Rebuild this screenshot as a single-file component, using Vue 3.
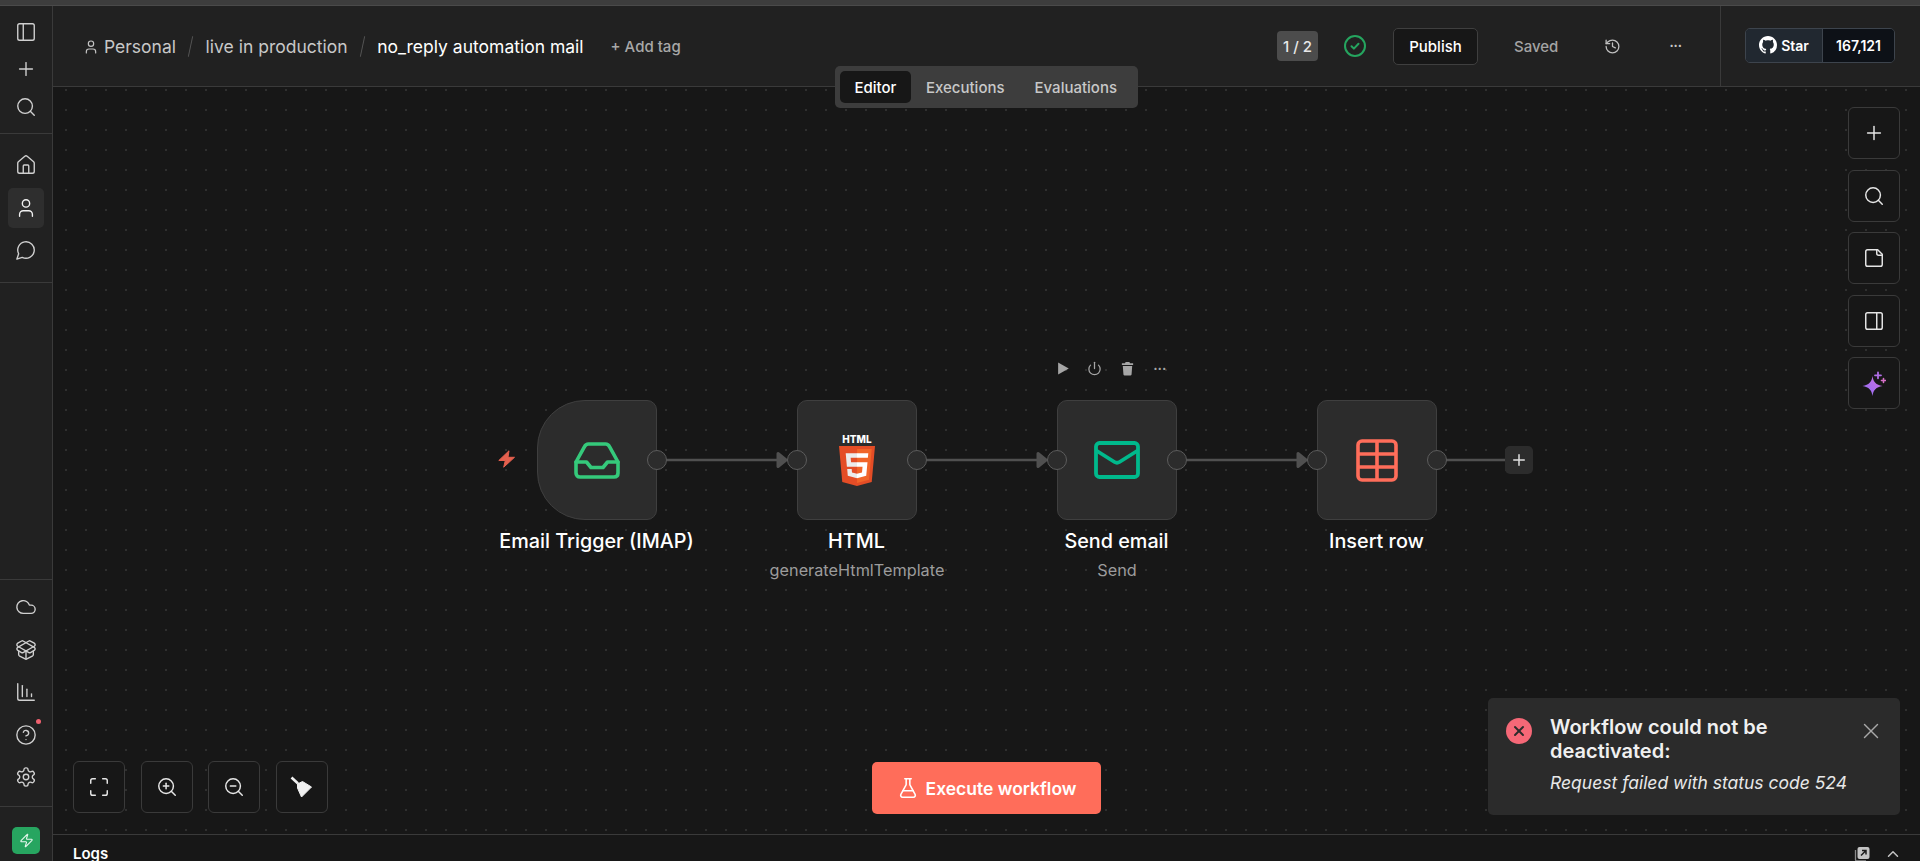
<script setup>
import { h } from 'vue'

const icons = {
  panelLeft: ['M5 3h14a2 2 0 0 1 2 2v14a2 2 0 0 1-2 2H5a2 2 0 0 1-2-2V5a2 2 0 0 1 2-2z', 'M9 3v18'],
  panelRight: ['M5 3h14a2 2 0 0 1 2 2v14a2 2 0 0 1-2 2H5a2 2 0 0 1-2-2V5a2 2 0 0 1 2-2z', 'M15 3v18'],
  plus: ['M5 12h14', 'M12 5v14'],
  search: ['M3 11a8 8 0 1 0 16 0a8 8 0 1 0-16 0', 'M21 21l-4.3-4.3'],
  home: ['M15 21v-8a1 1 0 0 0-1-1h-4a1 1 0 0 0-1 1v8', 'M3 10a2 2 0 0 1 .709-1.528l7-5.999a2 2 0 0 1 2.582 0l7 5.999A2 2 0 0 1 21 10v9a2 2 0 0 1-2 2H5a2 2 0 0 1-2-2z'],
  user: ['M19 21v-2a4 4 0 0 0-4-4H9a4 4 0 0 0-4 4v2', 'M8 7a4 4 0 1 0 8 0a4 4 0 1 0-8 0'],
  chat: ['M7.9 20A9 9 0 1 0 4 16.1L2 22Z'],
  cloud: ['M17.5 19H9a7 7 0 1 1 6.71-9h1.79a4.5 4.5 0 1 1 0 9Z'],
  box: ['M12 22v-9', 'M15.17 2.21a1.67 1.67 0 0 1 1.63 0L21 4.57a1.93 1.93 0 0 1 0 3.36L8.82 14.79a1.655 1.655 0 0 1-1.64 0L3 12.43a1.93 1.93 0 0 1 0-3.36z', 'M20 13v3.87a2.06 2.06 0 0 1-1.11 1.83l-6 3.08a1.93 1.93 0 0 1-1.78 0l-6-3.08A2.06 2.06 0 0 1 4 16.87V13', 'M21 12.43a1.93 1.93 0 0 0 0-3.36L8.83 2.2a1.64 1.64 0 0 0-1.63 0L3 4.57a1.93 1.93 0 0 0 0 3.36l12.18 6.86a1.636 1.636 0 0 0 1.63 0z'],
  chart: ['M13 17V9', 'M18 17v-3', 'M3 3v16a2 2 0 0 0 2 2h16', 'M8 17V5'],
  help: ['M2 12a10 10 0 1 0 20 0a10 10 0 1 0-20 0', 'M9.09 9a3 3 0 0 1 5.83 1c0 2-3 3-3 3', 'M12 17h.01'],
  gear: ['M12.22 2h-.44a2 2 0 0 0-2 2v.18a2 2 0 0 1-1 1.73l-.43.25a2 2 0 0 1-2 0l-.15-.08a2 2 0 0 0-2.73.73l-.22.38a2 2 0 0 0 .73 2.73l.15.1a2 2 0 0 1 1 1.72v.51a2 2 0 0 1-1 1.74l-.15.09a2 2 0 0 0-.73 2.73l.22.38a2 2 0 0 0 2.73.73l.15-.08a2 2 0 0 1 2 0l.43.25a2 2 0 0 1 1 1.73V20a2 2 0 0 0 2 2h.44a2 2 0 0 0 2-2v-.18a2 2 0 0 1 1-1.73l.43-.25a2 2 0 0 1 2 0l.15.08a2 2 0 0 0 2.73-.73l.22-.39a2 2 0 0 0-.73-2.73l-.15-.08a2 2 0 0 1-1-1.74v-.5a2 2 0 0 1 1-1.74l.15-.09a2 2 0 0 0 .73-2.73l-.22-.38a2 2 0 0 0-2.73-.73l-.15.08a2 2 0 0 1-2 0l-.43-.25a2 2 0 0 1-1-1.73V4a2 2 0 0 0-2-2z', 'M9 12a3 3 0 1 0 6 0a3 3 0 1 0-6 0'],
  zap: ['M4 14a1 1 0 0 1-.78-1.63l9.9-10.2a.5.5 0 0 1 .86.46l-1.92 6.02A1 1 0 0 0 13 10h7a1 1 0 0 1 .78 1.63l-9.9 10.2a.5.5 0 0 1-.86-.46l1.92-6.02A1 1 0 0 0 11 14z'],
  history: ['M3 12a9 9 0 1 0 9-9 9.75 9.75 0 0 0-6.74 2.74L3 8', 'M3 3v5h5', 'M12 7v5l4 2'],
  flask: ['M14 2v6a2 2 0 0 0 .245.96l5.51 10.08A2 2 0 0 1 18 22H6a2 2 0 0 1-1.755-2.96l5.51-10.08A2 2 0 0 0 10 8V2', 'M6.453 15h11.094', 'M8.5 2h7'],
  fit: ['M8 3H5a2 2 0 0 0-2 2v3', 'M21 8V5a2 2 0 0 0-2-2h-3', 'M3 16v3a2 2 0 0 0 2 2h3', 'M16 21h3a2 2 0 0 0 2-2v-3'],
  zoomIn: ['M3 11a8 8 0 1 0 16 0a8 8 0 1 0-16 0', 'M21 21l-4.35-4.35', 'M11 8v6', 'M8 11h6'],
  zoomOut: ['M3 11a8 8 0 1 0 16 0a8 8 0 1 0-16 0', 'M21 21l-4.35-4.35', 'M8 11h6'],
  note: ['M16 3H5a2 2 0 0 0-2 2v14a2 2 0 0 0 2 2h14a2 2 0 0 0 2-2V8Z', 'M15 3v4a2 2 0 0 0 2 2h4'],
  power: ['M12 2v10', 'M18.4 6.6a9 9 0 1 1-12.77.04'],
  close: ['M18 6 6 18', 'm6 6 12 12'],
  up: ['m18 15-6-6-6 6'],
}

const Ic = (p) =>
  h(
    'svg',
    { viewBox: '0 0 24 24', fill: 'none', stroke: 'currentColor', 'stroke-width': 2, 'stroke-linecap': 'round', 'stroke-linejoin': 'round' },
    icons[p.name].map((d) => h('path', { d })),
  )
Ic.props = ['name']

const sideTop = [{ name: 'panelLeft' }, { name: 'plus' }, { name: 'search' }]
const sideMid = [{ name: 'home' }, { name: 'user', active: true }, { name: 'chat' }]
const sideBottom = ['cloud', 'box', 'chart', 'help', 'gear']
const edges = [
  { x1: 614, x2: 724 },
  { x1: 874, x2: 984 },
  { x1: 1134, x2: 1244 },
]
</script>

<template>
  <div class="app">
    <div class="strip"></div>
    <div class="main">
      <aside class="sidebar">
        <div class="side-group top">
          <button v-for="i in sideTop" :key="i.name" class="side-btn"><Ic :name="i.name" class="side-ic" /></button>
        </div>
        <div class="side-group mid">
          <button v-for="i in sideMid" :key="i.name" class="side-btn" :class="{ active: i.active }"><Ic :name="i.name" class="side-ic" /></button>
        </div>
        <div class="side-spacer"></div>
        <div class="side-group bottom">
          <button v-for="n in sideBottom" :key="n" class="side-btn">
            <Ic :name="n" class="side-ic" />
            <span v-if="n === 'help'" class="dot"></span>
          </button>
        </div>
        <div class="side-foot">
          <div class="logo"><Ic name="zap" class="logo-ic" /></div>
        </div>
      </aside>

      <div class="content">
        <header class="header">
          <div class="crumbs">
            <Ic name="user" class="crumb-ic" />
            <span class="crumb">Personal</span>
            <span class="sep"></span>
            <span class="crumb">live in production</span>
            <span class="sep"></span>
            <span class="crumb current">no_reply automation mail</span>
            <span class="add-tag">+ Add tag</span>
          </div>
          <div class="actions">
            <span class="badge">1 / 2</span>
            <svg class="check" viewBox="0 0 22 22" fill="none">
              <circle cx="11" cy="11" r="10" stroke="#25a55f" stroke-width="2" />
              <path d="M7.5 11.2l2.4 2.4 4.6-4.8" stroke="#25a55f" stroke-width="2" stroke-linecap="round" stroke-linejoin="round" />
            </svg>
            <button class="publish">Publish</button>
            <span class="saved">Saved</span>
            <Ic name="history" class="hist" />
            <span class="more">•••</span>
          </div>
          <div class="star-wrap">
            <div class="star">
              <span class="star-l">
                <svg class="gh" viewBox="0 0 16 16" fill="currentColor"><path d="M8 0C3.58 0 0 3.58 0 8c0 3.54 2.29 6.53 5.47 7.59.4.07.55-.17.55-.38 0-.19-.01-.82-.01-1.49-2.01.37-2.53-.49-2.69-.94-.09-.23-.48-.94-.82-1.13-.28-.15-.68-.52-.01-.53.63-.01 1.08.58 1.23.82.72 1.21 1.87.87 2.33.66.07-.52.28-.87.51-1.07-1.78-.2-3.64-.89-3.64-3.95 0-.87.31-1.59.82-2.15-.08-.2-.36-1.02.08-2.12 0 0 .67-.21 2.2.82.64-.18 1.32-.27 2-.27.68 0 1.36.09 2 .27 1.53-1.04 2.2-.82 2.2-.82.44 1.1.16 1.92.08 2.12.51.56.82 1.27.82 2.15 0 3.07-1.87 3.75-3.65 3.95.29.25.54.73.54 1.48 0 1.07-.01 1.93-.01 2.2 0 .21.15.46.55.38A8.013 8.013 0 0016 8c0-4.42-3.58-8-8-8z"/></svg>
                Star
              </span>
              <span class="star-r">167,121</span>
            </div>
          </div>
        </header>

        <div class="tabs">
          <span class="tab on">Editor</span>
          <span class="tab">Executions</span>
          <span class="tab">Evaluations</span>
        </div>

        <main class="canvas">
          <svg class="wires" width="1867" height="747">
            <g fill="#505050" stroke="#505050" stroke-linejoin="round">
              <template v-for="e in edges" :key="e.x1">
                <path :d="`M${e.x1} 373 H${e.x2}`" fill="none" stroke-width="2.6" />
                <path :d="`M${e.x2 + 1} 366.5 L${e.x2 + 9} 373 L${e.x2 + 1} 379.5 Z`" stroke-width="3" />
              </template>
              <path d="M1374 373 H1456" fill="none" stroke-width="2.6" />
            </g>
          </svg>

          <svg class="bolt" viewBox="0 0 18 18"><path d="M11 .8 .8 10.500h6.500L5.700 17.200 16.500 7.300h-6.500z" fill="#e5604e" stroke="#e5604e" stroke-width="1" stroke-linejoin="round" /></svg>

          <div class="node n1 trigger">
            <svg class="glyph inbox" viewBox="0 0 46 37" fill="none" stroke="#35c97b" stroke-width="3.6" stroke-linejoin="round" stroke-linecap="round">
              <path d="M2 20 10.500 4.600C11.300 3 12.500 2 14.400 2h17.200c1.900 0 3.100 1 3.900 2.600L44 20v11c0 2.600-1.600 4-4 4H6c-2.400 0-4-1.400-4-4z" />
              <path d="M2 20h10.500l4.500 5.500h12l4.500-5.500H44" />
            </svg>
            <span class="handle right"></span>
          </div>
          <div class="node n2">
            <div class="html5">
              <span class="html5-t">HTML</span>
              <svg class="shield" viewBox="30 0 451 512" preserveAspectRatio="none">
                <path d="M71 460 30 0h451l-41 460-185 52z" fill="#e44d26" />
                <path d="M256 472l149-41 35-394H256z" fill="#f16529" />
                <path d="M256 208h-75l-5-58h80V94H114l15 171h127zM256 355l-63-17-4-45h-56l7 89 116 32z" fill="#ebebeb" />
                <path d="M255 208v57h70l-7 73-63 17v59l116-32 16-174zM255 94v56h137l5-56z" fill="#fff" />
              </svg>
            </div>
            <span class="handle left"></span>
            <span class="handle right"></span>
          </div>
          <div class="node n3">
            <svg class="glyph mail" viewBox="0 0 46 38" fill="none" stroke="#00b98c" stroke-width="3.800" stroke-linejoin="round" stroke-linecap="round">
              <rect x="2" y="2" width="42" height="34" rx="3.500" />
              <path d="M3 10l17.500 11c1.600 1 3.400 1 5 0L43 10" />
            </svg>
            <span class="handle left"></span>
            <span class="handle right"></span>
          </div>
          <div class="node n4">
            <svg class="glyph table" viewBox="0 0 42 43" fill="none" stroke="#ff6d5a" stroke-width="3.600" stroke-linejoin="round">
              <rect x="2" y="2" width="38" height="39" rx="4" />
              <path d="M2 15h38M2 28h38M21 2v39" />
            </svg>
            <span class="handle left"></span>
            <span class="handle right"></span>
          </div>

          <div class="label l1"><div class="l-main">Email Trigger (IMAP)</div></div>
          <div class="label l2"><div class="l-main">HTML</div><div class="l-sub">generateHtmlTemplate</div></div>
          <div class="label l3"><div class="l-main">Send email</div><div class="l-sub">Send</div></div>
          <div class="label l4"><div class="l-main">Insert row</div></div>

          <div class="node-tools">
            <svg class="tool" viewBox="0 0 24 24" fill="currentColor"><path d="M5 2.500 22 12 5 21.500z" /></svg>
            <Ic name="power" class="tool" />
            <svg class="tool" viewBox="0 0 24 24" fill="currentColor"><path d="M9 1.500h6l1 2h5v3H3v-3h5zM4.500 8h15l-1 13.500a2 2 0 0 1-2 1.500h-9a2 2 0 0 1-2-1.500z" /></svg>
            <span class="tool-more">•••</span>
          </div>

          <button class="add"><Ic name="plus" class="add-ic" /></button>

          <div class="right-tools">
            <button class="fbtn"><Ic name="plus" class="f-ic" /></button>
            <button class="fbtn"><Ic name="search" class="f-ic" /></button>
            <button class="fbtn"><Ic name="note" class="f-ic" /></button>
            <button class="fbtn"><Ic name="panelRight" class="f-ic" /></button>
            <button class="fbtn">
              <svg class="spark" viewBox="0 0 24 24">
                <defs>
                  <linearGradient id="sg" x1="0" y1="1" x2="1" y2="0">
                    <stop offset="0" stop-color="#8f6cf6" />
                    <stop offset="1" stop-color="#cf70e0" />
                  </linearGradient>
                </defs>
                <path d="M10.500 4.500C11.300 10.500 14 13.300 20.500 14.500 14 15.700 11.300 18.500 10.500 24.500 9.700 18.500 7 15.700.5 14.500 7 13.300 9.700 10.500 10.500 4.500z" fill="url(#sg)" />
                <path d="M16 .8v6M13 3.800h6" stroke="#b06ee6" stroke-width="1.800" stroke-linecap="round" />
                <path d="M21.500 7v4M19.500 9h4" stroke="#d870c8" stroke-width="1.600" stroke-linecap="round" />
              </svg>
            </button>
          </div>

          <div class="left-tools">
            <button class="fbtn"><Ic name="fit" class="f-ic" /></button>
            <button class="fbtn"><Ic name="zoomIn" class="f-ic" /></button>
            <button class="fbtn"><Ic name="zoomOut" class="f-ic" /></button>
            <button class="fbtn">
              <svg class="broom" viewBox="0 0 24 24" fill="currentColor" stroke="currentColor" stroke-linejoin="round">
                <path d="M1.500 2.500 8 8.500" fill="none" stroke-width="2.600" />
                <path d="M7.500 9 12.500 6.500 21.500 12 11.500 22 7.500 13z" stroke-width="1" />
              </svg>
            </button>
          </div>

          <button class="execute"><Ic name="flask" class="ex-ic" /><span>Execute workflow</span></button>

          <div class="toast">
            <span class="t-icon"><Ic name="close" class="t-x" /></span>
            <div class="t-body">
              <div class="t-title">Workflow could not be deactivated:</div>
              <div class="t-msg">Request failed with status code 524</div>
            </div>
            <Ic name="close" class="t-close" />
          </div>
        </main>

        <footer class="logs">
          <span class="logs-t">Logs</span>
          <div class="logs-r">
            <svg class="logs-pop" viewBox="0 0 16 16" fill="none">
              <path d="M1.500 4v9.500a1.500 1.500 0 0 0 1.500 1.500h9" stroke="#8a8a8a" stroke-width="1.300" />
              <rect x="3.500" y="1" width="12" height="12" rx="2" fill="#c4c4c4" />
              <path d="M7 9.500l5-5M8 4.500h4v4" stroke="#1c1c1c" stroke-width="1.500" />
            </svg>
            <Ic name="up" class="logs-ic" />
          </div>
        </footer>
      </div>
    </div>
  </div>
</template>

<style>
html, body { margin: 0; background: #171717; overflow: hidden; }
</style>

<style scoped>
.app {
  height: 861px;
  display: flex;
  flex-direction: column;
  overflow: hidden;
  font-family: Inter, "Noto Sans", sans-serif;
  color: #fff;
  background: #171717;
}
button { font: inherit; color: inherit; background: none; border: 0; padding: 0; }
.strip { height: 5px; background: #3d3d3d; border-bottom: 1px solid #4a4a4a; flex: none; }
.main { flex: 1; display: flex; min-height: 0; }

.sidebar {
  width: 53px;
  flex: none;
  box-sizing: border-box;
  background: #212121;
  border-right: 1px solid #3a3a3a;
  display: flex;
  flex-direction: column;
  align-items: stretch;
}
.side-group { display: flex; flex-direction: column; align-items: center; }
.side-group.top { height: 128px; padding-top: 7px; box-sizing: border-box; border-bottom: 1px solid #3a3a3a; }
.side-group.top .side-btn { height: 37.500px; }
.side-group.mid { height: 149px; padding-top: 10px; box-sizing: border-box; border-bottom: 1px solid #3a3a3a; }
.side-group.mid .side-btn { height: 42.500px; }
.side-spacer { flex: 1; }
.side-group.bottom { height: 228px; padding-top: 6px; box-sizing: border-box; border-top: 1px solid #3a3a3a; border-bottom: 1px solid #3a3a3a; }
.side-group.bottom .side-btn { height: 42.500px; }
.side-btn { width: 36px; display: flex; align-items: center; justify-content: center; color: #d0d0d0; position: relative; border-radius: 5px; }
.side-btn.active { background: #2e2e2e; color: #f0f0f0; height: 40px !important; margin: 1px 0; }
.side-ic { width: 22px; height: 22px; stroke-width: 1.500; }
.dot { position: absolute; top: 5px; right: 3px; width: 5px; height: 5px; background: #f0616f; border-radius: 50%; }
.side-foot { height: 54px; display: flex; justify-content: center; padding-top: 20px; box-sizing: border-box; flex: none; }
.logo { width: 28px; height: 27px; border-radius: 5px; background: #27a560; display: flex; align-items: center; justify-content: center; color: #e8f7ee; }
.logo-ic { width: 15px; height: 15px; stroke-width: 1.800; }

.content { flex: 1; min-width: 0; display: flex; flex-direction: column; position: relative; }
.header {
  height: 81px;
  flex: none;
  box-sizing: border-box;
  background: #212121;
  border-bottom: 1px solid #3a3a3a;
  display: flex;
  align-items: center;
}
.crumbs { display: flex; align-items: center; padding: 1px 0 0 30px; flex: 1; min-width: 0; }
.crumb-ic { width: 16px; height: 16px; color: #c4c4c4; margin-right: 5px; stroke-width: 1.800; }
.crumb { font-size: 17.500px; color: #c8c8c8; white-space: nowrap; }
.crumb.current { color: #fff; }
.sep { width: 1px; height: 21px; background: #555; transform: rotate(12deg); margin: 0 14.300px; }
.add-tag { margin-left: 27px; font-size: 15px; font-weight: 500; color: #a8a8a8; white-space: nowrap; }

.actions { display: flex; align-items: center; flex: none; padding-right: 36px; font-size: 15px; font-weight: 500; }
.badge { width: 41px; height: 30px; border-radius: 4px; background: #4c4c4c; color: #e8e8e8; display: flex; align-items: center; justify-content: center; }
.check { width: 22px; height: 22px; margin-left: 26px; }
.publish { width: 85px; height: 37px; margin-left: 27px; border-radius: 5px; background: #171717; border: 1px solid #3f3f3f; box-sizing: border-box; }
.saved { width: 44px; margin-left: 36px; color: #a4a4a4; text-align: center; }
.hist { width: 17px; height: 17px; margin-left: 46px; color: #c0c0c0; stroke-width: 1.800; }
.more { width: 16px; margin-left: 47px; font-size: 7px; letter-spacing: 0.500px; color: #c8c8c8; line-height: 14px; text-align: center; white-space: nowrap; }

.star-wrap { width: 200px; flex: none; height: 100%; border-left: 1px solid #3a3a3a; display: flex; align-items: center; box-sizing: border-box; padding-left: 24px; }
.star { display: flex; height: 35px; border: 1px solid #3d444d; border-radius: 5px; overflow: hidden; box-sizing: border-box; font-size: 14px; font-weight: 600; position: relative; top: -1px; }
.star-l { width: 77px; background: #212830; display: flex; align-items: center; justify-content: center; gap: 4px; border-right: 1px solid #3d444d; box-sizing: border-box; }
.gh { width: 18px; height: 18px; }
.star-r { width: 71px; background: #0d1117; display: flex; align-items: center; justify-content: center; }

.tabs {
  position: absolute;
  left: 782px;
  top: 60px;
  height: 42px;
  width: 303px;
  box-sizing: border-box;
  background: #3d3d3d;
  border-radius: 5px;
  padding: 5px;
  display: flex;
  z-index: 3;
  font-size: 15px;
  font-weight: 500;
}
.tab { color: #c8c8c8; padding: 0 15px; display: flex; align-items: center; }
.tab.on { background: #171717; border-radius: 5px; color: #fff; padding: 0 14.500px; }

.canvas {
  flex: 1;
  position: relative;
  overflow: hidden;
  background-color: #171717;
  background-image: radial-gradient(circle at 1px 1px, #2f2f2f 0.8px, transparent 1.100px);
  background-size: 20px 20px;
  background-position: 12px 2px;
}
.wires { position: absolute; left: 0; top: 0; }
.bolt { position: absolute; left: 445px; top: 363px; width: 18px; height: 18px; }

.node {
  position: absolute;
  top: 313px;
  width: 120px;
  height: 120px;
  box-sizing: border-box;
  background: #2c2c2c;
  border: 1.500px solid #3f3f3f;
  border-radius: 10px;
  display: flex;
  align-items: center;
  justify-content: center;
}
.n1 { left: 484px; }
.n2 { left: 744px; }
.n3 { left: 1004px; }
.n4 { left: 1264px; }
.trigger { border-radius: 48px 10px 10px 48px; }
.handle { position: absolute; top: 49px; width: 20px; height: 20px; box-sizing: border-box; border-radius: 50%; background: #2c2c2c; border: 1.500px solid #5c5c5c; }
.handle.right { right: -11px; }
.handle.left { left: -11px; }
.glyph { display: block; }
.inbox { width: 46px; height: 37px; }
.mail { width: 46px; height: 38px; }
.table { width: 42px; height: 43px; }
.html5 { display: flex; flex-direction: column; align-items: center; }
.html5-t { font-size: 10px; line-height: 10px; font-weight: 800; margin-bottom: 2px; }
.shield { width: 36px; height: 40px; }

.label { position: absolute; top: 440px; width: 300px; text-align: center; }
.l1 { left: 394px; }
.l2 { left: 654px; }
.l3 { left: 914px; }
.l4 { left: 1174px; }
.l-main { font-size: 19.800px; line-height: 28px; font-weight: 500; color: #fff; margin-left: -1px; }
.l-sub { font-size: 16.250px; line-height: 20px; margin-top: 4.500px; color: #9c9c9c; }

.node-tools { position: absolute; left: 1001.500px; top: 272px; display: flex; align-items: center; gap: 17.700px; color: #a6a6a6; height: 18px; }
.tool { width: 15px; height: 15px; }
.tool-more { font-size: 7px; letter-spacing: 0.500px; width: 15px; text-align: center; white-space: nowrap; }

.add { position: absolute; left: 1452px; top: 359px; width: 28px; height: 28px; border-radius: 5px; background: #2c2c2c; display: flex; align-items: center; justify-content: center; color: #e0e0e0; }
.add-ic { width: 18px; height: 18px; }

.right-tools { position: absolute; left: 1795px; top: 20px; display: flex; flex-direction: column; gap: 10.500px; }
.left-tools { position: absolute; left: 20px; top: 674px; display: flex; gap: 15.500px; }
.fbtn { width: 52px; height: 52px; box-sizing: border-box; background: #171717; border: 1.500px solid #3a3a3a; border-radius: 6px; display: flex; align-items: center; justify-content: center; color: #e6e6e6; }
.f-ic { width: 22px; height: 22px; stroke-width: 1.600; }
.spark { width: 24px; height: 25px; display: block; }
.broom { width: 24px; height: 24px; color: #f0f0f0; display: block; }

.execute {
  position: absolute;
  left: 819px;
  top: 675px;
  width: 229px;
  height: 52px;
  border-radius: 5px;
  background: #ff6d5a;
  color: #fff;
  font-size: 17.500px;
  font-weight: 600;
  display: flex;
  align-items: center;
  justify-content: center;
  gap: 7px;
}
.ex-ic { width: 22px; height: 22px; stroke-width: 1.700; }

.toast {
  position: absolute;
  left: 1435px;
  top: 611px;
  width: 412px;
  height: 117px;
  box-sizing: border-box;
  background: #2b2b2b;
  border-radius: 5px;
  display: flex;
  padding: 18px 18px 0;
}
.t-icon { width: 26px; height: 26px; margin-top: 2px; flex: none; background: #f56877; border-radius: 50%; display: flex; align-items: center; justify-content: center; color: #2b2b2b; }
.t-x { width: 16px; height: 16px; stroke-width: 3; }
.t-body { margin-left: 18px; flex: 1; }
.t-title { font-size: 20px; line-height: 24px; font-weight: 600; color: #f0f0f0; width: 280px; margin-top: -1px; }
.t-msg { font-size: 17.500px; line-height: 24px; font-style: italic; margin-top: 8px; color: #e8e8e8; white-space: nowrap; }
.t-close { width: 26px; height: 26px; color: #a8a8a8; stroke-width: 1.300; flex: none; position: absolute; right: 16px; top: 20px; }

.logs {
  height: 27px;
  flex: none;
  box-sizing: border-box;
  border-top: 1.500px solid #3a3a3a;
  background: #171717;
  display: flex;
  justify-content: space-between;
  padding: 7px 18px 0 20px;
  overflow: hidden;
}
.logs-t { font-size: 15px; line-height: 24px; font-weight: 600; }
.logs-r { display: flex; gap: 14px; color: #c4c4c4; }
.logs-pop { width: 16px; height: 16px; margin-top: 4px; }
.logs-ic { width: 18px; height: 18px; margin-top: 3px; }
</style>
